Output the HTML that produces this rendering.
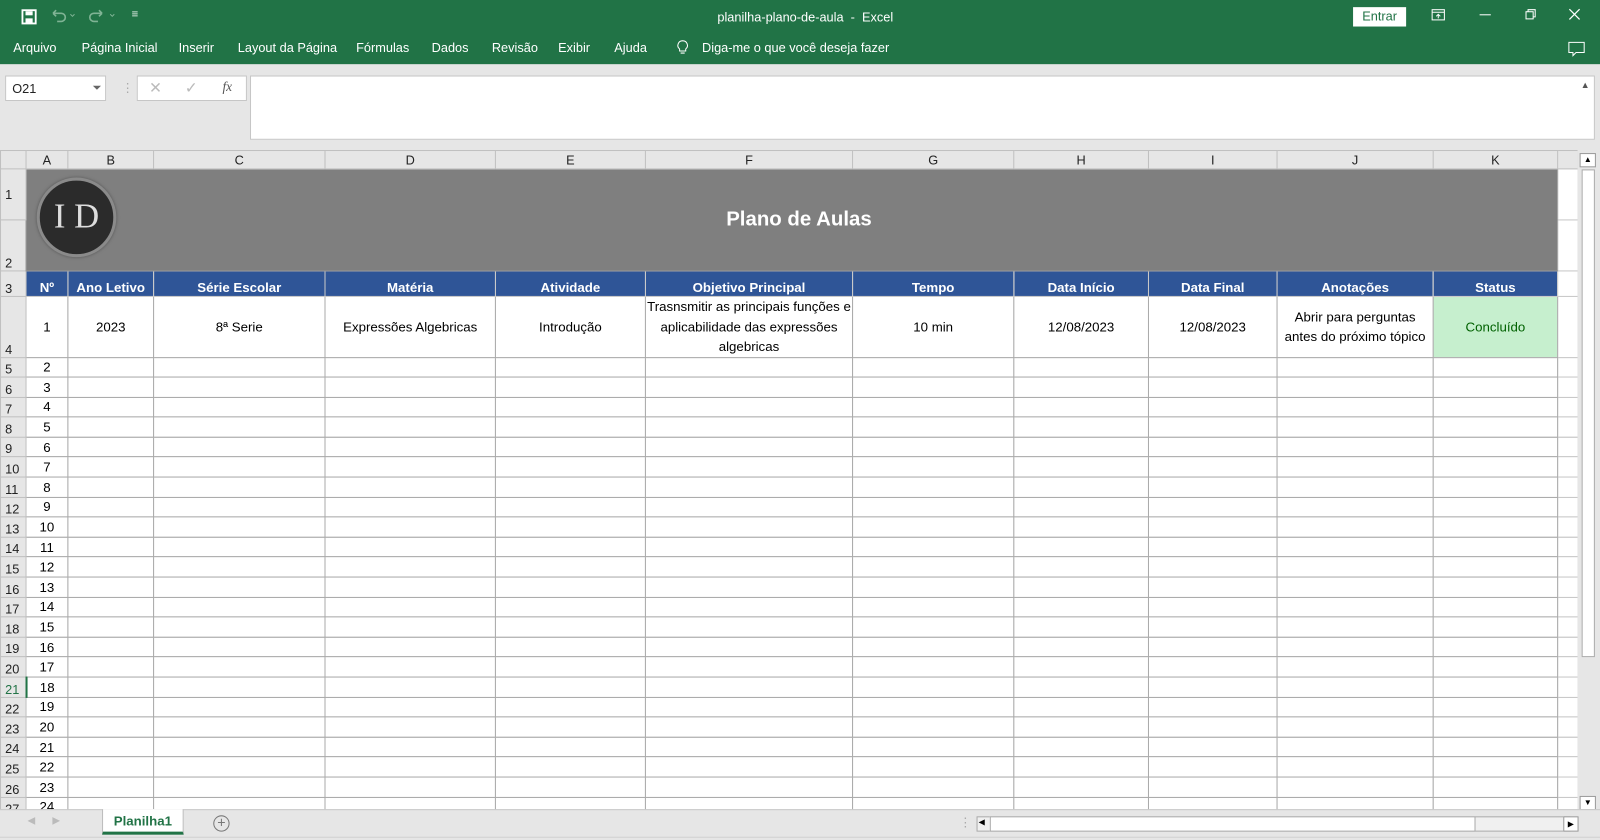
<!DOCTYPE html>
<html><head><meta charset="utf-8"><style>
*{margin:0;padding:0;box-sizing:border-box}
html,body{width:1600px;height:839px;overflow:hidden;background:#e6e6e6}
#wrap{position:absolute;left:0;top:0;width:1568px;height:823px;transform:scale(1.020408);transform-origin:0 0;font-family:"Liberation Sans",sans-serif;background:#e6e6e6;overflow:hidden}
.abs{position:absolute}
#top{left:0;top:0;width:1568px;height:63px;background:#217346;color:#fff}
.menu span{position:absolute;top:40px;font-size:12.5px}
#fb{left:0;top:63px;width:1568px;height:84px;background:#e6e6e6}
table{border-collapse:collapse;table-layout:fixed;position:absolute;left:0;top:147px;font-size:13px}
td{border:1px solid #c8c8c8;text-align:center;overflow:hidden;white-space:nowrap;height:19.6px;padding:0;background:#fff;color:#000}
td.rh{background:#e6e6e6;border-color:#c0c0c0;text-align:left;padding-left:4px;font-size:12.5px;color:#222;vertical-align:bottom}
tr.ch td{background:#e6e6e6;height:18px;font-size:12.5px;color:#222;border-color:#c0c0c0}
tr.hd td.c{background:#2f5597;color:#fff;font-weight:bold;border-color:#c8c8c8;height:25px;vertical-align:bottom;padding-bottom:1px}
td.g{border-color:#aaa}
</style></head><body><div id="wrap">
<div id="top" class="abs">
<svg class="abs" style="left:20px;top:8px" width="18" height="18" viewBox="0 0 18 18"><rect x="2" y="2" width="13" height="13" fill="none" stroke="#fff" stroke-width="1.8"/><rect x="5" y="3" width="7" height="4" fill="#fff"/><rect x="5" y="10" width="7" height="5" fill="#fff"/></svg>
<svg class="abs" style="left:48px;top:8px" width="80" height="16" viewBox="0 0 80 16" fill="none" stroke="#7fb394" stroke-width="1.6"><path d="M4 5h8a4 4 0 010 8H8M4 5l3-3M4 5l3 3"/><path d="M21 6l2 2 2-2" stroke-width="1"/><path d="M52 5h-8a4 4 0 000 8h4M52 5l-3-3M52 5l-3 3"/><path d="M60 6l2 2 2-2" stroke-width="1"/></svg>
<div class="abs" style="left:129px;top:8px;font-size:11px">&#8801;</div>
<div class="abs" style="left:703px;top:10px;font-size:12.5px">planilha-plano-de-aula &nbsp;-&nbsp; Excel</div>
<div class="abs" style="left:1326px;top:7px;width:52px;height:19px;background:#fff;color:#217346;font-size:12.5px;text-align:center;line-height:19px">Entrar</div>
<svg class="abs" style="left:1402px;top:8px" width="16" height="14" viewBox="0 0 16 14" fill="none" stroke="#fff"><rect x="1.5" y="1.5" width="12" height="10"/><path d="M1.5 4h12M7.5 10V6M5.5 8l2-2 2 2"/></svg>
<div class="abs" style="left:1450px;top:14px;width:11px;height:1px;background:#fff"></div>
<svg class="abs" style="left:1494px;top:8px" width="12" height="12" fill="none" stroke="#fff"><rect x="1.5" y="3.5" width="7" height="7"/><path d="M3.5 3.5V1.5h7v7h-2"/></svg>
<svg class="abs" style="left:1537px;top:8px" width="12" height="12" stroke="#fff" stroke-width="1.2"><path d="M1 1l10 10M11 1L1 11"/></svg>
<div class="menu">
<span style="left:13px">Arquivo</span><span style="left:80px">Página Inicial</span><span style="left:175px">Inserir</span><span style="left:233px">Layout da Página</span><span style="left:349px">Fórmulas</span><span style="left:423px">Dados</span><span style="left:482px">Revisão</span><span style="left:547px">Exibir</span><span style="left:602px">Ajuda</span><span style="left:688px">Diga-me o que você deseja fazer</span></div>
<svg class="abs" style="left:662px;top:39px" width="14" height="16" fill="none" stroke="#fff"><path d="M7 1a4.5 4.5 0 00-3 8v2h6V9a4.5 4.5 0 00-3-8zM5 13h4"/></svg>
<svg class="abs" style="left:1536px;top:40px" width="18" height="16" fill="none" stroke="#fff"><path d="M1.5 1.5h15v10h-8l-3 3v-3h-4z"/></svg>
</div>
<div id="fb" class="abs">
<div class="abs" style="left:5px;top:11px;width:99px;height:25px;background:#fff;border:1px solid #c6c6c6;font-size:12.5px;padding:5px 6px;color:#222">O21</div>
<div class="abs" style="left:91px;top:21px;border:4px solid transparent;border-top:4px solid #666"></div>
<div class="abs" style="left:119px;top:16px;color:#aaa;font-size:12px">&#8942;</div>
<div class="abs" style="left:134px;top:11px;width:108px;height:25px;background:#fff;border:1px solid #c6c6c6"></div>
<div class="abs" style="left:146px;top:14px;color:#bbb;font-size:15px">&#10005;</div>
<div class="abs" style="left:181px;top:14px;color:#bbb;font-size:15px">&#10003;</div>
<div class="abs" style="left:218px;top:14px;color:#555;font-size:13px;font-style:italic;font-family:'Liberation Serif',serif">fx</div>
<div class="abs" style="left:245px;top:11px;width:1318px;height:63px;background:#fff;border:1px solid #c6c6c6"></div>
<div class="abs" style="left:1549px;top:15px;font-size:9px;color:#555">&#9650;</div>
</div>
<table>
<colgroup><col style="width:25px"><col style="width:41px"><col style="width:84px"><col style="width:168px"><col style="width:167px"><col style="width:147px"><col style="width:203px"><col style="width:158px"><col style="width:132px"><col style="width:126px"><col style="width:153px"><col style="width:122px"><col style="width:20px"></colgroup>
<tr class="ch"><td></td><td>A</td><td>B</td><td>C</td><td>D</td><td>E</td><td>F</td><td>G</td><td>H</td><td>I</td><td>J</td><td>K</td><td></td></tr>
<tr><td class="rh" style="height:50px;vertical-align:middle">1</td><td colspan="11" rowspan="2" style="background:#7f7f7f;border-color:#999;position:relative;color:#fff;font-weight:bold;font-size:20px;padding-left:14px">Plano de Aulas
<div style="position:absolute;left:10px;top:8px;width:78px;height:78px;border-radius:50%;background:#2b2b2b;border:3px solid #8a8a8a;box-shadow:0 0 3px #555;color:#ddd;font-family:'Liberation Serif',serif;font-weight:normal;font-size:34px;line-height:72px;text-align:center">I D</div></td><td></td></tr>
<tr><td class="rh" style="height:50px">2</td><td></td></tr>
<tr class="hd"><td class="rh">3</td><td class="c">Nº</td><td class="c">Ano Letivo</td><td class="c">Série Escolar</td><td class="c">Matéria</td><td class="c">Atividade</td><td class="c">Objetivo Principal</td><td class="c">Tempo</td><td class="c">Data Início</td><td class="c">Data Final</td><td class="c">Anotações</td><td class="c">Status</td><td></td></tr>
<tr style="height:59px"><td class="rh">4</td><td class="g">1</td><td class="g">2023</td><td class="g">8ª Serie</td><td class="g">Expressões Algebricas</td><td class="g">Introdução</td><td class="g" style="white-space:normal;line-height:19.5px">Trasnsmitir as principais funções e aplicabilidade das expressões algebricas</td><td class="g">10 min</td><td class="g">12/08/2023</td><td class="g">12/08/2023</td><td class="g" style="white-space:normal;line-height:19.5px">Abrir para perguntas antes do próximo tópico</td><td class="g" style="background:#c6efce;color:#006100">Concluído</td><td></td></tr>
<tr><td class="rh">5</td><td class="g">2</td><td class="g"></td><td class="g"></td><td class="g"></td><td class="g"></td><td class="g"></td><td class="g"></td><td class="g"></td><td class="g"></td><td class="g"></td><td class="g"></td><td></td></tr>
<tr><td class="rh">6</td><td class="g">3</td><td class="g"></td><td class="g"></td><td class="g"></td><td class="g"></td><td class="g"></td><td class="g"></td><td class="g"></td><td class="g"></td><td class="g"></td><td class="g"></td><td></td></tr>
<tr><td class="rh">7</td><td class="g">4</td><td class="g"></td><td class="g"></td><td class="g"></td><td class="g"></td><td class="g"></td><td class="g"></td><td class="g"></td><td class="g"></td><td class="g"></td><td class="g"></td><td></td></tr>
<tr><td class="rh">8</td><td class="g">5</td><td class="g"></td><td class="g"></td><td class="g"></td><td class="g"></td><td class="g"></td><td class="g"></td><td class="g"></td><td class="g"></td><td class="g"></td><td class="g"></td><td></td></tr>
<tr><td class="rh">9</td><td class="g">6</td><td class="g"></td><td class="g"></td><td class="g"></td><td class="g"></td><td class="g"></td><td class="g"></td><td class="g"></td><td class="g"></td><td class="g"></td><td class="g"></td><td></td></tr>
<tr><td class="rh">10</td><td class="g">7</td><td class="g"></td><td class="g"></td><td class="g"></td><td class="g"></td><td class="g"></td><td class="g"></td><td class="g"></td><td class="g"></td><td class="g"></td><td class="g"></td><td></td></tr>
<tr><td class="rh">11</td><td class="g">8</td><td class="g"></td><td class="g"></td><td class="g"></td><td class="g"></td><td class="g"></td><td class="g"></td><td class="g"></td><td class="g"></td><td class="g"></td><td class="g"></td><td></td></tr>
<tr><td class="rh">12</td><td class="g">9</td><td class="g"></td><td class="g"></td><td class="g"></td><td class="g"></td><td class="g"></td><td class="g"></td><td class="g"></td><td class="g"></td><td class="g"></td><td class="g"></td><td></td></tr>
<tr><td class="rh">13</td><td class="g">10</td><td class="g"></td><td class="g"></td><td class="g"></td><td class="g"></td><td class="g"></td><td class="g"></td><td class="g"></td><td class="g"></td><td class="g"></td><td class="g"></td><td></td></tr>
<tr><td class="rh">14</td><td class="g">11</td><td class="g"></td><td class="g"></td><td class="g"></td><td class="g"></td><td class="g"></td><td class="g"></td><td class="g"></td><td class="g"></td><td class="g"></td><td class="g"></td><td></td></tr>
<tr><td class="rh">15</td><td class="g">12</td><td class="g"></td><td class="g"></td><td class="g"></td><td class="g"></td><td class="g"></td><td class="g"></td><td class="g"></td><td class="g"></td><td class="g"></td><td class="g"></td><td></td></tr>
<tr><td class="rh">16</td><td class="g">13</td><td class="g"></td><td class="g"></td><td class="g"></td><td class="g"></td><td class="g"></td><td class="g"></td><td class="g"></td><td class="g"></td><td class="g"></td><td class="g"></td><td></td></tr>
<tr><td class="rh">17</td><td class="g">14</td><td class="g"></td><td class="g"></td><td class="g"></td><td class="g"></td><td class="g"></td><td class="g"></td><td class="g"></td><td class="g"></td><td class="g"></td><td class="g"></td><td></td></tr>
<tr><td class="rh">18</td><td class="g">15</td><td class="g"></td><td class="g"></td><td class="g"></td><td class="g"></td><td class="g"></td><td class="g"></td><td class="g"></td><td class="g"></td><td class="g"></td><td class="g"></td><td></td></tr>
<tr><td class="rh">19</td><td class="g">16</td><td class="g"></td><td class="g"></td><td class="g"></td><td class="g"></td><td class="g"></td><td class="g"></td><td class="g"></td><td class="g"></td><td class="g"></td><td class="g"></td><td></td></tr>
<tr><td class="rh">20</td><td class="g">17</td><td class="g"></td><td class="g"></td><td class="g"></td><td class="g"></td><td class="g"></td><td class="g"></td><td class="g"></td><td class="g"></td><td class="g"></td><td class="g"></td><td></td></tr>
<tr><td class="rh" style="color:#217346;border-right:2px solid #217346">21</td><td class="g">18</td><td class="g"></td><td class="g"></td><td class="g"></td><td class="g"></td><td class="g"></td><td class="g"></td><td class="g"></td><td class="g"></td><td class="g"></td><td class="g"></td><td></td></tr>
<tr><td class="rh">22</td><td class="g">19</td><td class="g"></td><td class="g"></td><td class="g"></td><td class="g"></td><td class="g"></td><td class="g"></td><td class="g"></td><td class="g"></td><td class="g"></td><td class="g"></td><td></td></tr>
<tr><td class="rh">23</td><td class="g">20</td><td class="g"></td><td class="g"></td><td class="g"></td><td class="g"></td><td class="g"></td><td class="g"></td><td class="g"></td><td class="g"></td><td class="g"></td><td class="g"></td><td></td></tr>
<tr><td class="rh">24</td><td class="g">21</td><td class="g"></td><td class="g"></td><td class="g"></td><td class="g"></td><td class="g"></td><td class="g"></td><td class="g"></td><td class="g"></td><td class="g"></td><td class="g"></td><td></td></tr>
<tr><td class="rh">25</td><td class="g">22</td><td class="g"></td><td class="g"></td><td class="g"></td><td class="g"></td><td class="g"></td><td class="g"></td><td class="g"></td><td class="g"></td><td class="g"></td><td class="g"></td><td></td></tr>
<tr><td class="rh">26</td><td class="g">23</td><td class="g"></td><td class="g"></td><td class="g"></td><td class="g"></td><td class="g"></td><td class="g"></td><td class="g"></td><td class="g"></td><td class="g"></td><td class="g"></td><td></td></tr>
<tr><td class="rh">27</td><td class="g">24</td><td class="g"></td><td class="g"></td><td class="g"></td><td class="g"></td><td class="g"></td><td class="g"></td><td class="g"></td><td class="g"></td><td class="g"></td><td class="g"></td><td></td></tr>
</table>
<div class="abs" style="left:1546px;top:147px;width:22px;height:650px;background:#e6e6e6"></div>
<div class="abs" style="left:1548px;top:150px;width:16px;height:14px;background:#fff;border:1px solid #999;font-size:8px;text-align:center;line-height:12px">&#9650;</div>
<div class="abs" style="left:1550px;top:166px;width:13px;height:478px;background:#fff;border:1px solid #aaa"></div>
<div class="abs" style="left:1548px;top:780px;width:16px;height:14px;background:#fff;border:1px solid #999;font-size:8px;text-align:center;line-height:12px">&#9660;</div>
<div class="abs" style="left:0;top:793px;width:1568px;height:30px;background:#e6e6e6;border-top:1px solid #c6c6c6"></div>
<div class="abs" style="left:27px;top:799px;color:#bbb;font-size:10px">&#9664;&nbsp;&nbsp;&nbsp;&nbsp;&nbsp;&nbsp;&#9654;</div>
<div class="abs" style="left:100px;top:793px;width:80px;height:25px;background:#fff;border-bottom:3px solid #217346;border-left:1px solid #bbb;border-right:1px solid #bbb;color:#217346;font-weight:bold;font-size:13px;text-align:center;line-height:24px">Planilha1</div>
<div class="abs" style="left:209px;top:799px;width:16px;height:16px;border:1.5px solid #777;border-radius:50%;color:#777;font-size:14px;line-height:12px;text-align:center">+</div>
<div class="abs" style="left:940px;top:799px;color:#aaa;font-size:12px">&#8942;</div>
<div class="abs" style="left:957px;top:800px;width:582px;height:15px;background:#f0f0f0;border:1px solid #aaa"></div>
<div class="abs" style="left:970px;top:800px;width:476px;height:15px;background:#fff;border:1px solid #aaa"></div>
<div class="abs" style="left:959px;top:801px;font-size:8px">&#9664;</div>
<div class="abs" style="left:1532px;top:800px;width:15px;height:15px;background:#fff;border:1px solid #999;font-size:8px;text-align:center;line-height:13px">&#9654;</div>
<div class="abs" style="left:0;top:820px;width:1568px;height:3px;background:#e6e6e6;border-top:1px solid #d0d0d0"></div>
</div></body></html>
